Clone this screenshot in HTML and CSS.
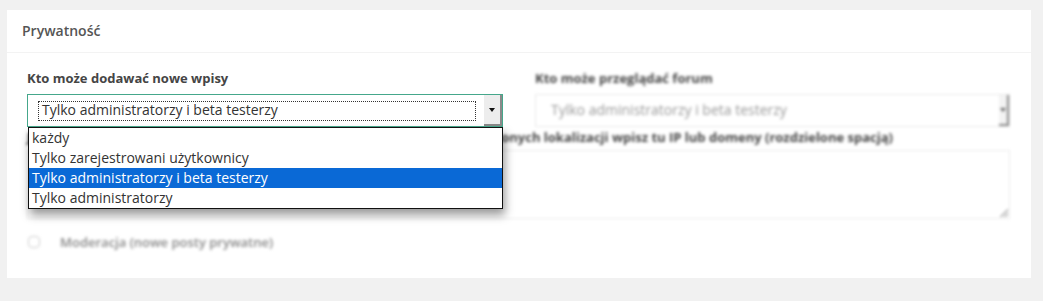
FILE: index.html
```html
<!DOCTYPE html>
<html lang="pl">
<head>
    <meta charset="UTF-8">
    <meta name="viewport" content="width=device-width, initial-scale=1.0">
    <title>Prywatność</title>
    <link rel="stylesheet" href="styles.css">
</head>
<body>
    <div class="card">
        <div class="card-header">Prywatność</div>
        <div class="card-body">
            <div class="row">
                <div class="field">
                    <label class="field-label">Kto może dodawać nowe wpisy</label>
                    <div class="select active">
                        <span class="select-value"><span class="focus-ring">Tylko administratorzy i beta testerzy</span></span>
                        <span class="select-arrow"></span>
                        <ul class="dropdown">
                            <li>każdy</li>
                            <li>Tylko zarejestrowani użytkownicy</li>
                            <li class="selected">Tylko administratorzy i beta testerzy</li>
                            <li>Tylko administratorzy</li>
                        </ul>
                    </div>
                </div>
                <div class="field blurred">
                    <label class="field-label">Kto może przeglądać forum</label>
                    <div class="select muted">
                        <span class="select-value">Tylko administratorzy i beta testerzy</span>
                        <span class="select-arrow"></span>
                    </div>
                </div>
            </div>

            <div class="field wide">
                <label class="field-label blurred">Jeżeli chcesz ograniczyć dostęp do forum tylko dla użytkowników z określonych lokalizacji wpisz tu IP lub domeny (rozdzielone spacją)</label>
                <div class="textarea blurred"><span class="resize"></span></div>
            </div>

            <div class="check-row blurred">
                <span class="checkbox"></span>
                <span class="check-label">Moderacja (nowe posty prywatne)</span>
            </div>
        </div>
    </div>
</body>
</html>
```

FILE: styles.css
```css
:root {
    --page-bg: #f1f1f1;
    --card-bg: #ffffff;
    --text-color: #444;
    --muted-color: #9a9a9a;
    --focus-color: #45a78b;
    --highlight: #0a69d6;
}
* { box-sizing: border-box; }
body {
    margin: 0;
    padding: 10px 12px 0 7px;
    background: var(--page-bg);
    font-family: 'Open Sans', 'Noto Sans', sans-serif;
    color: var(--text-color);
}
.card {
    background: var(--card-bg);
    height: 268px;
}
.card-header {
    height: 43px;
    padding: 11px 15px 0;
    font-size: 14px;
    font-weight: 600;
    color: #555;
    border-bottom: 1px solid #f3f3f3;
}
.card-body { padding: 16px 21px 0 20px; }
.row {
    display: grid;
    grid-template-columns: 476px 475px;
    gap: 32px;
}
.field-label {
    display: block;
    font-size: 13px;
    font-weight: 700;
    line-height: 18px;
    margin-bottom: 7px;
    color: #454545;
    white-space: nowrap;
}
.blurred { filter: blur(1.4px); }

/* select */
.select {
    position: relative;
    display: flex;
    height: 33px;
    border: 1px solid #e9e9e9;
    font-size: 14px;
}
.select.active { border-color: var(--focus-color); }
.select-value {
    flex: 1;
    padding: 6px 8px 0 10px;
    color: #333;
}
.focus-ring {
    display: block;
    height: 20px;
    line-height: 18px;
    padding-left: 4px;
    outline: 1px dotted #333;
    outline-offset: -1px;
}
.select.muted .select-value { padding: 6px 0 0 15px; line-height: 18px; color: #999; }
.select-arrow {
    position: relative;
    width: 18px;
    background: #ededed;
    border-right: 2px solid #8a8a8a;
    border-bottom: 2px solid #8a8a8a;
}
.select.muted .select-arrow { width: 10px; background: #f3f3f3; }
.select-arrow::after {
    content: '';
    position: absolute;
    left: 5px;
    top: 13px;
    border-left: 3px solid transparent;
    border-right: 3px solid transparent;
    border-top: 4px solid #111;
}
.select.muted .select-arrow::after { left: 1px; border-top-color: #666; }

/* open popup list */
.dropdown {
    position: absolute;
    top: 32px;
    left: 0;
    right: -1px;
    z-index: 5;
    margin: 0;
    padding: 0;
    list-style: none;
    background: #fff;
    border: 1px solid #111;
    box-shadow: 2px 6px 9px rgba(0, 0, 0, 0.4);
}
.dropdown li {
    height: 20px;
    line-height: 19px;
    padding-left: 3px;
    color: #333;
}
.dropdown li.selected { background: var(--highlight); color: #fff; }

/* second row */
.field.wide { margin-top: 1px; }
.field.wide .field-label { margin-bottom: 4px; }
.textarea {
    position: relative;
    width: 983px;
    height: 69px;
    border: 1px solid #ececec;
}
.resize {
    position: absolute;
    right: 1px;
    bottom: 1px;
    width: 8px;
    height: 8px;
    background: linear-gradient(135deg, transparent 50%, #aaa 50%, #aaa 60%, transparent 60%, transparent 75%, #aaa 75%, #aaa 85%, transparent 85%);
}

.check-row {
    display: flex;
    align-items: center;
    margin-top: 14px;
    padding-left: 1px;
}
.checkbox {
    width: 12px;
    height: 12px;
    border: 1px solid #ccc;
    border-radius: 4px;
    margin-right: 20px;
}
.check-label { font-size: 13px; font-weight: 600; color: #888; }
```
